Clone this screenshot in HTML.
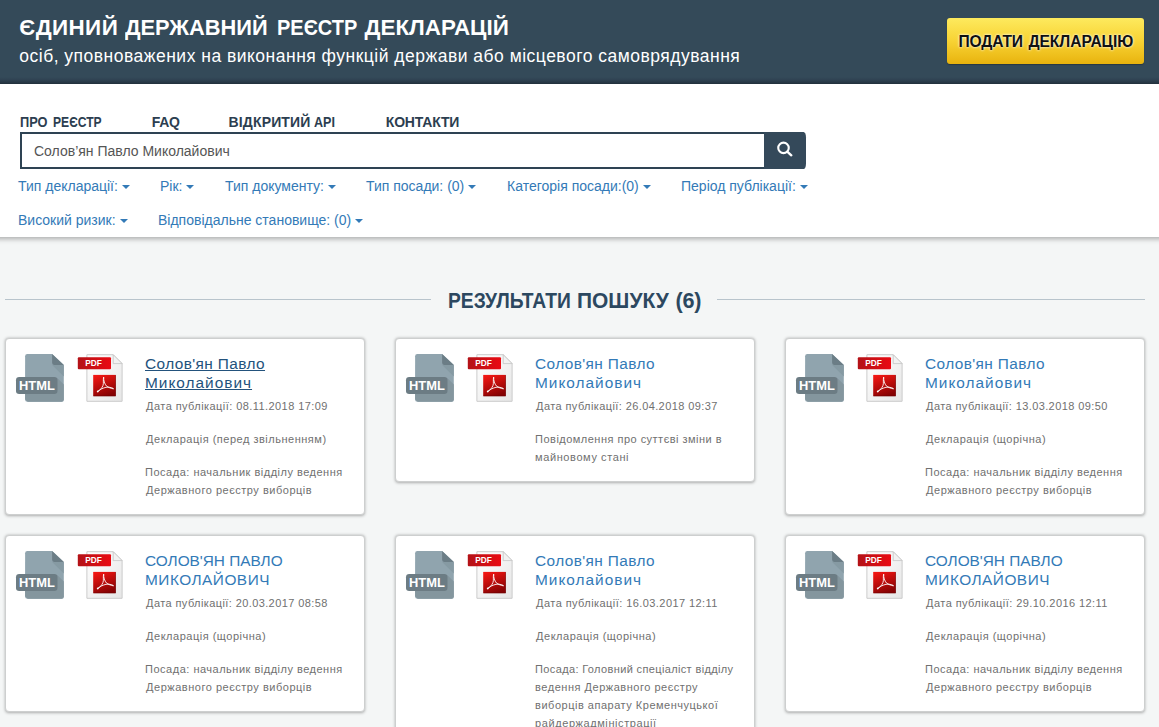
<!DOCTYPE html>
<html lang="uk">
<head>
<meta charset="utf-8">
<title>Єдиний державний реєстр декларацій</title>
<style>
*{box-sizing:border-box;margin:0;padding:0}
html,body{width:1159px;height:727px;overflow:hidden}
body{background:#f4f6f6;font-family:"Liberation Sans",Arial,sans-serif;font-size:14px;color:#333;position:relative}
a{text-decoration:none;color:inherit}
.abs{position:absolute;white-space:nowrap}
#hdr{position:absolute;left:0;top:0;width:1159px;height:84px;background:linear-gradient(#344a59 0,#344a59 77px,#2f4252 80px,#233340 84px)}
#btn{position:absolute;left:947px;top:18px;width:197px;height:46px;border-radius:3px;background:linear-gradient(#fdea5e,#f8d334 50%,#e8b30e);box-shadow:0 1px 1px rgba(0,0,0,.25)}
#panel{position:absolute;left:-10px;top:84px;width:1179px;height:153px;background:#fff;box-shadow:0 2px 5px rgba(0,0,0,.3)}
#sbox{position:absolute;left:20px;top:132px;width:784px;height:37px;border:2px solid #2e4353;background:#fff;border-radius:0 5px 5px 0}
#sbtn{position:absolute;left:764px;top:132px;width:42px;height:37px;background:#34495a;border-radius:0 2.4px 2.4px 0/0 5.5px 5.5px 0}
#stext{left:12px;top:7px;font-size:14px;line-height:20px;color:#555}
.flt{font-size:14px;line-height:20px;color:#337ab7}
.flt i{display:inline-block;width:0;height:0;margin-left:4px;vertical-align:2px;border-top:4px solid #337ab7;border-left:4px solid transparent;border-right:4px solid transparent}
#hr1,#hr2{position:absolute;top:299px;height:1px;background:#b8c4cc}
#hr1{left:5px;width:426px}
#hr2{left:717px;width:428px}
.card{position:absolute;width:360px;background:#fff;border-radius:4px;border:1px solid #cdcfcf;box-shadow:0 .5px 3px rgba(0,0,0,.3)}
.card>*{margin:-1px 0 0 -1px}
.card .nm{position:absolute;font-size:15.4px;line-height:19px;color:#337ab7;white-space:nowrap}
.card .nm.ul{color:#23527c}
.card .nm.ul span{text-decoration:underline}
.card .ln{position:absolute;font-size:11px;line-height:18px;color:#707070;white-space:nowrap}
.ico{position:absolute}
#ttl{left:0;top:16.2px;font-size:22.4px;line-height:24px;font-weight:bold;color:#fff;}
#ttl span{position:absolute;top:0;transform-origin:0 50%}
#sub{left:19.3px;top:43.5px;font-size:17.5px;line-height:24px;font-weight:normal;color:#fff;letter-spacing:0.492px;}
#btnt{left:0;top:11.5px;font-size:15.6px;line-height:24px;font-weight:bold;color:#111;text-shadow:0 0 3px rgba(255,255,255,.9),0 0 2px rgba(255,255,255,.7)}
#btnt span{position:absolute;top:0;transform-origin:0 50%}
#n1{left:0;top:109.5px;font-size:14px;line-height:24px;font-weight:bold;color:#2c3e50;}
#n1 span{position:absolute;top:0;transform-origin:0 50%}
#n2{left:151.8px;top:109.5px;font-size:14px;line-height:24px;font-weight:bold;color:#2c3e50;letter-spacing:-0.4px;}
#n3{left:0;top:109.5px;font-size:14px;line-height:24px;font-weight:bold;color:#2c3e50;}
#n3 span{position:absolute;top:0;transform-origin:0 50%}
#n4{left:385.8px;top:109.5px;font-size:14px;line-height:24px;font-weight:bold;color:#2c3e50;letter-spacing:-0.186px;}
#res{left:0;top:289.2px;font-size:21.6px;line-height:24px;font-weight:bold;color:#2c4860;}
#res span{position:absolute;top:0;transform-origin:0 50%}
</style>
</head>
<body>
<div id="hdr"></div>
<div id="ttl" class="abs"><span style="left:19.3px;letter-spacing:0.42px">ЄДИНИЙ</span> <span style="left:125.4px;transform:scaleX(0.9745)">ДЕРЖАВНИЙ</span> <span style="left:276.7px;transform:scaleX(0.8920)">РЕЄСТР</span> <span style="left:364.6px;letter-spacing:-0.011px">ДЕКЛАРАЦІЙ</span></div>
<div id="sub" class="abs">осіб, уповноважених на виконання функцій держави або місцевого самоврядування</div>
<a id="btn"><span id="btnt" class="abs"><span style="left:11.6px;letter-spacing:-0.22px">ПОДАТИ</span> <span style="left:81.4px;letter-spacing:-0.044px">ДЕКЛАРАЦІЮ</span></span></a>

<div id="panel"></div>
<a id="n1" class="abs"><span style="left:19.9px;transform:scaleX(0.9138)">ПРО</span> <span style="left:53.0px;transform:scaleX(0.8636)">РЕЄСТР</span></a>
<a id="n2" class="abs">FAQ</a>
<a id="n3" class="abs"><span style="left:228.6px;letter-spacing:0.137px">ВІДКРИТИЙ</span> <span style="left:314.2px;transform:scaleX(0.8957)">API</span></a>
<a id="n4" class="abs">КОНТАКТИ</a>

<div id="sbox"><span id="stext" class="abs">Солов’ян Павло Миколайович</span></div>
<div id="sbtn">
<svg width="42" height="37" viewBox="0 0 42 37" style="position:absolute;left:0;top:0"><circle cx="19.5" cy="15.9" r="5.25" fill="none" stroke="#fff" stroke-width="2.1"/><path d="M23.5 19.9 L27.3 23.3" stroke="#fff" stroke-width="2.4" stroke-linecap="round"/></svg>
</div>

<a class="abs flt" style="left:18px;top:176px">Тип декларації:<i></i></a>
<a class="abs flt" style="left:160px;top:176px">Рік:<i></i></a>
<a class="abs flt" style="left:225px;top:176px">Тип документу:<i></i></a>
<a class="abs flt" style="left:366px;top:176px">Тип посади: (0)<i></i></a>
<a class="abs flt" style="left:507px;top:176px">Категорія посади:(0)<i></i></a>
<a class="abs flt" style="left:681px;top:176px">Період публікації:<i></i></a>
<a class="abs flt" style="left:18px;top:210px">Високий ризик:<i></i></a>
<a class="abs flt" style="left:158px;top:210px">Відповідальне становище: (0)<i></i></a>

<div id="hr1"></div><div id="hr2"></div>
<div id="res" class="abs"><span style="left:447.7px;transform:scaleX(0.8919)">РЕЗУЛЬТАТИ</span> <span style="left:576.9px;transform:scaleX(0.9702)">ПОШУКУ</span> <span style="left:675.6px;letter-spacing:-0.25px">(6)</span></div>

<div class="card" style="left:5px;top:338px;height:177px">
<svg class="ico" style="left:9px;top:14px" width="56" height="52" viewBox="0 0 56 52">
<path d="M13.4 2h24.7l11.7 11v34.500a2.300 2.300 0 0 1-2.300 2.300H13.4a2.300 2.300 0 0 1-2.300-2.300V4.300A2.300 2.300 0 0 1 13.400 2z" fill="#90a4ae"/>
<path d="M38.1 13h11.700v11.500z" fill="#869aa3"/>
<path d="M38.1 2l11.700 11h-9.400a2.300 2.300 0 0 1-2.300-2.300z" fill="#6b7d86"/>
<path d="M43.500 26.200l6.300 6.300v15a2.300 2.300 0 0 1-2.300 2.300H13.800L11.100 47.200v-7z" fill="#84969e"/>
<rect x="2" y="25" width="41.500" height="16.900" rx="3.200" fill="#6c7c84"/>
<text x="5" y="37.900" font-family="Liberation Sans,Arial,sans-serif" font-weight="bold" font-size="13.400" fill="#fff" textLength="35.800" lengthAdjust="spacingAndGlyphs">HTML</text>
</svg>
<svg class="ico" style="left:70px;top:14px" width="56" height="52" viewBox="0 0 56 52">
<defs>
<linearGradient id="pg" x1="0" y1="0" x2="1" y2="1"><stop offset="0" stop-color="#ffffff"/><stop offset="1" stop-color="#e6e6e6"/></linearGradient>
<linearGradient id="lb" x1="0" y1="0" x2="1" y2="0"><stop offset="0" stop-color="#b31217"/><stop offset="1" stop-color="#ea0a12"/></linearGradient>
<linearGradient id="sq" x1="0.200" y1="0" x2="0.600" y2="1"><stop offset="0" stop-color="#f21612"/><stop offset="1" stop-color="#850203"/></linearGradient>
</defs>
<path d="M11.900 2.700h26.300l8.900 8.900v37.700H11.900z" fill="url(#pg)" stroke="#cbcbcb" stroke-width="1"/>
<path d="M38.200 2.700v8.900h8.900z" fill="#f2f2f2" stroke="#c4c4c4" stroke-width=".8" stroke-linejoin="round"/>
<rect x="2.800" y="5.200" width="33.200" height="12.100" rx="1" fill="url(#lb)"/>
<text x="10.200" y="14.200" font-family="Liberation Sans,Arial,sans-serif" font-weight="bold" font-size="8.200" fill="#fff" textLength="16.600" lengthAdjust="spacingAndGlyphs">PDF</text>
<rect x="18.200" y="22.900" width="22.600" height="21.300" fill="url(#sq)"/>
<path d="M40.500 23.200v20.700h-22" fill="none" stroke="#5e0000" stroke-opacity=".55" stroke-width=".7"/>
<g fill="none" stroke="#fff" stroke-opacity=".92" stroke-width=".95" stroke-linecap="round">
<path d="M28.500 25.500C28 29 28.800 31 28 33.400C26.800 36.400 24.600 38.700 22.400 39.700"/>
<path d="M28.700 25.500C28.300 28.500 29.700 32 31.500 34C33.400 35.600 36 36.300 38.200 36.800"/>
<path d="M22.500 39.600C25 37.500 28 36 31 35.300C33.600 34.800 36.500 35.500 38.200 36.400"/>
</g>
<circle cx="22.700" cy="39.400" r=".9" fill="#fff" fill-opacity=".9"/>
</svg>
<a class="nm ul" style="left:140.0px;top:15.8px"><span style="letter-spacing:0.4px">Солов'ян Павло</span><br><span style="letter-spacing:1.0px">Миколайович</span></a>
<div class="ln" style="left:141.1px;top:59.0px"><span style="letter-spacing:0.431px">Дата публікації: 08.11.2018 17:09</span></div>
<div class="ln" style="left:141.1px;top:92.4px"><span style="letter-spacing:0.507px">Декларація (перед звільненням)</span></div>
<div class="ln" style="left:140.1px;top:125.3px"><span style="letter-spacing:0.5px">Посада: начальник відділу ведення</span></div>
<div class="ln" style="left:141.1px;top:143.3px"><span style="letter-spacing:0.515px">Державного реєстру виборців</span></div>
</div>
<div class="card" style="left:395px;top:338px;height:144px">
<svg class="ico" style="left:9px;top:14px" width="56" height="52" viewBox="0 0 56 52">
<path d="M13.4 2h24.7l11.7 11v34.500a2.300 2.300 0 0 1-2.300 2.300H13.4a2.300 2.300 0 0 1-2.300-2.300V4.300A2.300 2.300 0 0 1 13.400 2z" fill="#90a4ae"/>
<path d="M38.1 13h11.700v11.500z" fill="#869aa3"/>
<path d="M38.1 2l11.700 11h-9.400a2.300 2.300 0 0 1-2.300-2.300z" fill="#6b7d86"/>
<path d="M43.500 26.200l6.300 6.300v15a2.300 2.300 0 0 1-2.300 2.300H13.800L11.100 47.200v-7z" fill="#84969e"/>
<rect x="2" y="25" width="41.500" height="16.900" rx="3.200" fill="#6c7c84"/>
<text x="5" y="37.900" font-family="Liberation Sans,Arial,sans-serif" font-weight="bold" font-size="13.400" fill="#fff" textLength="35.800" lengthAdjust="spacingAndGlyphs">HTML</text>
</svg>
<svg class="ico" style="left:70px;top:14px" width="56" height="52" viewBox="0 0 56 52">
<defs>
<linearGradient id="pg" x1="0" y1="0" x2="1" y2="1"><stop offset="0" stop-color="#ffffff"/><stop offset="1" stop-color="#e6e6e6"/></linearGradient>
<linearGradient id="lb" x1="0" y1="0" x2="1" y2="0"><stop offset="0" stop-color="#b31217"/><stop offset="1" stop-color="#ea0a12"/></linearGradient>
<linearGradient id="sq" x1="0.200" y1="0" x2="0.600" y2="1"><stop offset="0" stop-color="#f21612"/><stop offset="1" stop-color="#850203"/></linearGradient>
</defs>
<path d="M11.900 2.700h26.300l8.900 8.900v37.700H11.900z" fill="url(#pg)" stroke="#cbcbcb" stroke-width="1"/>
<path d="M38.200 2.700v8.900h8.900z" fill="#f2f2f2" stroke="#c4c4c4" stroke-width=".8" stroke-linejoin="round"/>
<rect x="2.800" y="5.200" width="33.200" height="12.100" rx="1" fill="url(#lb)"/>
<text x="10.200" y="14.200" font-family="Liberation Sans,Arial,sans-serif" font-weight="bold" font-size="8.200" fill="#fff" textLength="16.600" lengthAdjust="spacingAndGlyphs">PDF</text>
<rect x="18.200" y="22.900" width="22.600" height="21.300" fill="url(#sq)"/>
<path d="M40.500 23.200v20.700h-22" fill="none" stroke="#5e0000" stroke-opacity=".55" stroke-width=".7"/>
<g fill="none" stroke="#fff" stroke-opacity=".92" stroke-width=".95" stroke-linecap="round">
<path d="M28.500 25.500C28 29 28.800 31 28 33.400C26.800 36.400 24.600 38.700 22.400 39.700"/>
<path d="M28.700 25.500C28.300 28.500 29.700 32 31.500 34C33.400 35.600 36 36.300 38.200 36.800"/>
<path d="M22.500 39.600C25 37.500 28 36 31 35.300C33.600 34.800 36.500 35.500 38.200 36.400"/>
</g>
<circle cx="22.700" cy="39.400" r=".9" fill="#fff" fill-opacity=".9"/>
</svg>
<a class="nm" style="left:140.0px;top:15.8px"><span style="letter-spacing:0.4px">Солов'ян Павло</span><br><span style="letter-spacing:1.0px">Миколайович</span></a>
<div class="ln" style="left:141.1px;top:59.0px"><span style="letter-spacing:0.4px">Дата публікації: 26.04.2018 09:37</span></div>
<div class="ln" style="left:140.1px;top:92.4px"><span style="letter-spacing:0.481px">Повідомлення про суттєві зміни в</span></div>
<div class="ln" style="left:140.1px;top:110.4px"><span style="letter-spacing:0.593px">майновому стані</span></div>
</div>
<div class="card" style="left:785px;top:338px;height:177px">
<svg class="ico" style="left:9px;top:14px" width="56" height="52" viewBox="0 0 56 52">
<path d="M13.4 2h24.7l11.7 11v34.500a2.300 2.300 0 0 1-2.300 2.300H13.4a2.300 2.300 0 0 1-2.300-2.300V4.300A2.300 2.300 0 0 1 13.400 2z" fill="#90a4ae"/>
<path d="M38.1 13h11.700v11.500z" fill="#869aa3"/>
<path d="M38.1 2l11.700 11h-9.400a2.300 2.300 0 0 1-2.300-2.300z" fill="#6b7d86"/>
<path d="M43.500 26.200l6.300 6.300v15a2.300 2.300 0 0 1-2.300 2.300H13.800L11.100 47.200v-7z" fill="#84969e"/>
<rect x="2" y="25" width="41.500" height="16.900" rx="3.200" fill="#6c7c84"/>
<text x="5" y="37.900" font-family="Liberation Sans,Arial,sans-serif" font-weight="bold" font-size="13.400" fill="#fff" textLength="35.800" lengthAdjust="spacingAndGlyphs">HTML</text>
</svg>
<svg class="ico" style="left:70px;top:14px" width="56" height="52" viewBox="0 0 56 52">
<defs>
<linearGradient id="pg" x1="0" y1="0" x2="1" y2="1"><stop offset="0" stop-color="#ffffff"/><stop offset="1" stop-color="#e6e6e6"/></linearGradient>
<linearGradient id="lb" x1="0" y1="0" x2="1" y2="0"><stop offset="0" stop-color="#b31217"/><stop offset="1" stop-color="#ea0a12"/></linearGradient>
<linearGradient id="sq" x1="0.200" y1="0" x2="0.600" y2="1"><stop offset="0" stop-color="#f21612"/><stop offset="1" stop-color="#850203"/></linearGradient>
</defs>
<path d="M11.900 2.700h26.300l8.900 8.900v37.700H11.900z" fill="url(#pg)" stroke="#cbcbcb" stroke-width="1"/>
<path d="M38.200 2.700v8.900h8.900z" fill="#f2f2f2" stroke="#c4c4c4" stroke-width=".8" stroke-linejoin="round"/>
<rect x="2.800" y="5.200" width="33.200" height="12.100" rx="1" fill="url(#lb)"/>
<text x="10.200" y="14.200" font-family="Liberation Sans,Arial,sans-serif" font-weight="bold" font-size="8.200" fill="#fff" textLength="16.600" lengthAdjust="spacingAndGlyphs">PDF</text>
<rect x="18.200" y="22.900" width="22.600" height="21.300" fill="url(#sq)"/>
<path d="M40.500 23.200v20.700h-22" fill="none" stroke="#5e0000" stroke-opacity=".55" stroke-width=".7"/>
<g fill="none" stroke="#fff" stroke-opacity=".92" stroke-width=".95" stroke-linecap="round">
<path d="M28.500 25.500C28 29 28.800 31 28 33.400C26.800 36.400 24.600 38.700 22.400 39.700"/>
<path d="M28.700 25.500C28.300 28.500 29.700 32 31.500 34C33.400 35.600 36 36.300 38.200 36.800"/>
<path d="M22.500 39.600C25 37.500 28 36 31 35.300C33.600 34.800 36.500 35.500 38.200 36.400"/>
</g>
<circle cx="22.700" cy="39.400" r=".9" fill="#fff" fill-opacity=".9"/>
</svg>
<a class="nm" style="left:140.0px;top:15.8px"><span style="letter-spacing:0.4px">Солов'ян Павло</span><br><span style="letter-spacing:1.0px">Миколайович</span></a>
<div class="ln" style="left:141.1px;top:59.0px"><span style="letter-spacing:0.4px">Дата публікації: 13.03.2018 09:50</span></div>
<div class="ln" style="left:141.1px;top:92.4px"><span style="letter-spacing:0.505px">Декларація (щорічна)</span></div>
<div class="ln" style="left:140.1px;top:125.3px"><span style="letter-spacing:0.5px">Посада: начальник відділу ведення</span></div>
<div class="ln" style="left:141.1px;top:143.3px"><span style="letter-spacing:0.515px">Державного реєстру виборців</span></div>
</div>
<div class="card" style="left:5px;top:535px;height:177px">
<svg class="ico" style="left:9px;top:14px" width="56" height="52" viewBox="0 0 56 52">
<path d="M13.4 2h24.7l11.7 11v34.500a2.300 2.300 0 0 1-2.300 2.300H13.4a2.300 2.300 0 0 1-2.300-2.300V4.300A2.300 2.300 0 0 1 13.400 2z" fill="#90a4ae"/>
<path d="M38.1 13h11.700v11.500z" fill="#869aa3"/>
<path d="M38.1 2l11.700 11h-9.400a2.300 2.300 0 0 1-2.300-2.300z" fill="#6b7d86"/>
<path d="M43.500 26.200l6.300 6.300v15a2.300 2.300 0 0 1-2.300 2.300H13.800L11.100 47.200v-7z" fill="#84969e"/>
<rect x="2" y="25" width="41.500" height="16.900" rx="3.200" fill="#6c7c84"/>
<text x="5" y="37.900" font-family="Liberation Sans,Arial,sans-serif" font-weight="bold" font-size="13.400" fill="#fff" textLength="35.800" lengthAdjust="spacingAndGlyphs">HTML</text>
</svg>
<svg class="ico" style="left:70px;top:14px" width="56" height="52" viewBox="0 0 56 52">
<defs>
<linearGradient id="pg" x1="0" y1="0" x2="1" y2="1"><stop offset="0" stop-color="#ffffff"/><stop offset="1" stop-color="#e6e6e6"/></linearGradient>
<linearGradient id="lb" x1="0" y1="0" x2="1" y2="0"><stop offset="0" stop-color="#b31217"/><stop offset="1" stop-color="#ea0a12"/></linearGradient>
<linearGradient id="sq" x1="0.200" y1="0" x2="0.600" y2="1"><stop offset="0" stop-color="#f21612"/><stop offset="1" stop-color="#850203"/></linearGradient>
</defs>
<path d="M11.900 2.700h26.300l8.900 8.900v37.700H11.900z" fill="url(#pg)" stroke="#cbcbcb" stroke-width="1"/>
<path d="M38.200 2.700v8.900h8.900z" fill="#f2f2f2" stroke="#c4c4c4" stroke-width=".8" stroke-linejoin="round"/>
<rect x="2.800" y="5.200" width="33.200" height="12.100" rx="1" fill="url(#lb)"/>
<text x="10.200" y="14.200" font-family="Liberation Sans,Arial,sans-serif" font-weight="bold" font-size="8.200" fill="#fff" textLength="16.600" lengthAdjust="spacingAndGlyphs">PDF</text>
<rect x="18.200" y="22.900" width="22.600" height="21.300" fill="url(#sq)"/>
<path d="M40.500 23.200v20.700h-22" fill="none" stroke="#5e0000" stroke-opacity=".55" stroke-width=".7"/>
<g fill="none" stroke="#fff" stroke-opacity=".92" stroke-width=".95" stroke-linecap="round">
<path d="M28.500 25.500C28 29 28.800 31 28 33.400C26.800 36.400 24.600 38.700 22.400 39.700"/>
<path d="M28.700 25.500C28.300 28.500 29.700 32 31.500 34C33.400 35.600 36 36.300 38.200 36.800"/>
<path d="M22.500 39.600C25 37.500 28 36 31 35.300C33.600 34.800 36.500 35.500 38.200 36.400"/>
</g>
<circle cx="22.700" cy="39.400" r=".9" fill="#fff" fill-opacity=".9"/>
</svg>
<a class="nm" style="left:140.0px;top:15.8px"><span style="letter-spacing:-0.015px">СОЛОВ'ЯН ПАВЛО</span><br><span style="letter-spacing:0.5px">МИКОЛАЙОВИЧ</span></a>
<div class="ln" style="left:141.1px;top:59.0px"><span style="letter-spacing:0.4px">Дата публікації: 20.03.2017 08:58</span></div>
<div class="ln" style="left:141.1px;top:92.4px"><span style="letter-spacing:0.505px">Декларація (щорічна)</span></div>
<div class="ln" style="left:140.1px;top:125.3px"><span style="letter-spacing:0.5px">Посада: начальник відділу ведення</span></div>
<div class="ln" style="left:141.1px;top:143.3px"><span style="letter-spacing:0.515px">Державного реєстру виборців</span></div>
</div>
<div class="card" style="left:395px;top:535px;height:215px">
<svg class="ico" style="left:9px;top:14px" width="56" height="52" viewBox="0 0 56 52">
<path d="M13.4 2h24.7l11.7 11v34.500a2.300 2.300 0 0 1-2.300 2.300H13.4a2.300 2.300 0 0 1-2.300-2.300V4.300A2.300 2.300 0 0 1 13.400 2z" fill="#90a4ae"/>
<path d="M38.1 13h11.700v11.500z" fill="#869aa3"/>
<path d="M38.1 2l11.700 11h-9.400a2.300 2.300 0 0 1-2.300-2.300z" fill="#6b7d86"/>
<path d="M43.500 26.200l6.300 6.300v15a2.300 2.300 0 0 1-2.300 2.300H13.800L11.100 47.200v-7z" fill="#84969e"/>
<rect x="2" y="25" width="41.500" height="16.900" rx="3.200" fill="#6c7c84"/>
<text x="5" y="37.900" font-family="Liberation Sans,Arial,sans-serif" font-weight="bold" font-size="13.400" fill="#fff" textLength="35.800" lengthAdjust="spacingAndGlyphs">HTML</text>
</svg>
<svg class="ico" style="left:70px;top:14px" width="56" height="52" viewBox="0 0 56 52">
<defs>
<linearGradient id="pg" x1="0" y1="0" x2="1" y2="1"><stop offset="0" stop-color="#ffffff"/><stop offset="1" stop-color="#e6e6e6"/></linearGradient>
<linearGradient id="lb" x1="0" y1="0" x2="1" y2="0"><stop offset="0" stop-color="#b31217"/><stop offset="1" stop-color="#ea0a12"/></linearGradient>
<linearGradient id="sq" x1="0.200" y1="0" x2="0.600" y2="1"><stop offset="0" stop-color="#f21612"/><stop offset="1" stop-color="#850203"/></linearGradient>
</defs>
<path d="M11.900 2.700h26.300l8.900 8.900v37.700H11.900z" fill="url(#pg)" stroke="#cbcbcb" stroke-width="1"/>
<path d="M38.200 2.700v8.900h8.900z" fill="#f2f2f2" stroke="#c4c4c4" stroke-width=".8" stroke-linejoin="round"/>
<rect x="2.800" y="5.200" width="33.200" height="12.100" rx="1" fill="url(#lb)"/>
<text x="10.200" y="14.200" font-family="Liberation Sans,Arial,sans-serif" font-weight="bold" font-size="8.200" fill="#fff" textLength="16.600" lengthAdjust="spacingAndGlyphs">PDF</text>
<rect x="18.200" y="22.900" width="22.600" height="21.300" fill="url(#sq)"/>
<path d="M40.500 23.200v20.700h-22" fill="none" stroke="#5e0000" stroke-opacity=".55" stroke-width=".7"/>
<g fill="none" stroke="#fff" stroke-opacity=".92" stroke-width=".95" stroke-linecap="round">
<path d="M28.500 25.500C28 29 28.800 31 28 33.400C26.800 36.400 24.600 38.700 22.400 39.700"/>
<path d="M28.700 25.500C28.300 28.500 29.700 32 31.500 34C33.400 35.600 36 36.300 38.200 36.800"/>
<path d="M22.500 39.600C25 37.500 28 36 31 35.300C33.600 34.800 36.500 35.500 38.200 36.400"/>
</g>
<circle cx="22.700" cy="39.400" r=".9" fill="#fff" fill-opacity=".9"/>
</svg>
<a class="nm" style="left:140.0px;top:15.8px"><span style="letter-spacing:0.4px">Солов'ян Павло</span><br><span style="letter-spacing:1.0px">Миколайович</span></a>
<div class="ln" style="left:141.1px;top:59.0px"><span style="letter-spacing:0.431px">Дата публікації: 16.03.2017 12:11</span></div>
<div class="ln" style="left:141.1px;top:92.4px"><span style="letter-spacing:0.505px">Декларація (щорічна)</span></div>
<div class="ln" style="left:140.1px;top:125.3px"><span style="letter-spacing:0.362px">Посада: Головний спеціаліст відділу</span></div>
<div class="ln" style="left:140.1px;top:143.3px"><span style="letter-spacing:0.52px">ведення Державного реєстру</span></div>
<div class="ln" style="left:140.1px;top:161.3px"><span style="letter-spacing:0.51px">виборців апарату Кременчуцької</span></div>
<div class="ln" style="left:140.1px;top:179.3px"><span style="letter-spacing:0.579px">райдержадміністрації</span></div>
</div>
<div class="card" style="left:785px;top:535px;height:177px">
<svg class="ico" style="left:9px;top:14px" width="56" height="52" viewBox="0 0 56 52">
<path d="M13.4 2h24.7l11.7 11v34.500a2.300 2.300 0 0 1-2.300 2.300H13.4a2.300 2.300 0 0 1-2.300-2.300V4.300A2.300 2.300 0 0 1 13.400 2z" fill="#90a4ae"/>
<path d="M38.1 13h11.700v11.500z" fill="#869aa3"/>
<path d="M38.1 2l11.700 11h-9.400a2.300 2.300 0 0 1-2.300-2.300z" fill="#6b7d86"/>
<path d="M43.500 26.200l6.300 6.300v15a2.300 2.300 0 0 1-2.300 2.300H13.800L11.100 47.200v-7z" fill="#84969e"/>
<rect x="2" y="25" width="41.500" height="16.900" rx="3.200" fill="#6c7c84"/>
<text x="5" y="37.900" font-family="Liberation Sans,Arial,sans-serif" font-weight="bold" font-size="13.400" fill="#fff" textLength="35.800" lengthAdjust="spacingAndGlyphs">HTML</text>
</svg>
<svg class="ico" style="left:70px;top:14px" width="56" height="52" viewBox="0 0 56 52">
<defs>
<linearGradient id="pg" x1="0" y1="0" x2="1" y2="1"><stop offset="0" stop-color="#ffffff"/><stop offset="1" stop-color="#e6e6e6"/></linearGradient>
<linearGradient id="lb" x1="0" y1="0" x2="1" y2="0"><stop offset="0" stop-color="#b31217"/><stop offset="1" stop-color="#ea0a12"/></linearGradient>
<linearGradient id="sq" x1="0.200" y1="0" x2="0.600" y2="1"><stop offset="0" stop-color="#f21612"/><stop offset="1" stop-color="#850203"/></linearGradient>
</defs>
<path d="M11.900 2.700h26.300l8.900 8.900v37.700H11.900z" fill="url(#pg)" stroke="#cbcbcb" stroke-width="1"/>
<path d="M38.200 2.700v8.900h8.900z" fill="#f2f2f2" stroke="#c4c4c4" stroke-width=".8" stroke-linejoin="round"/>
<rect x="2.800" y="5.200" width="33.200" height="12.100" rx="1" fill="url(#lb)"/>
<text x="10.200" y="14.200" font-family="Liberation Sans,Arial,sans-serif" font-weight="bold" font-size="8.200" fill="#fff" textLength="16.600" lengthAdjust="spacingAndGlyphs">PDF</text>
<rect x="18.200" y="22.900" width="22.600" height="21.300" fill="url(#sq)"/>
<path d="M40.500 23.200v20.700h-22" fill="none" stroke="#5e0000" stroke-opacity=".55" stroke-width=".7"/>
<g fill="none" stroke="#fff" stroke-opacity=".92" stroke-width=".95" stroke-linecap="round">
<path d="M28.500 25.500C28 29 28.800 31 28 33.400C26.800 36.400 24.600 38.700 22.400 39.700"/>
<path d="M28.700 25.500C28.300 28.500 29.700 32 31.500 34C33.400 35.600 36 36.300 38.200 36.800"/>
<path d="M22.500 39.600C25 37.500 28 36 31 35.300C33.600 34.800 36.500 35.500 38.200 36.400"/>
</g>
<circle cx="22.700" cy="39.400" r=".9" fill="#fff" fill-opacity=".9"/>
</svg>
<a class="nm" style="left:140.0px;top:15.8px"><span style="letter-spacing:-0.015px">СОЛОВ'ЯН ПАВЛО</span><br><span style="letter-spacing:0.5px">МИКОЛАЙОВИЧ</span></a>
<div class="ln" style="left:141.1px;top:59.0px"><span style="letter-spacing:0.431px">Дата публікації: 29.10.2016 12:11</span></div>
<div class="ln" style="left:141.1px;top:92.4px"><span style="letter-spacing:0.505px">Декларація (щорічна)</span></div>
<div class="ln" style="left:140.1px;top:125.3px"><span style="letter-spacing:0.5px">Посада: начальник відділу ведення</span></div>
<div class="ln" style="left:141.1px;top:143.3px"><span style="letter-spacing:0.515px">Державного реєстру виборців</span></div>
</div>

</body>
</html>
